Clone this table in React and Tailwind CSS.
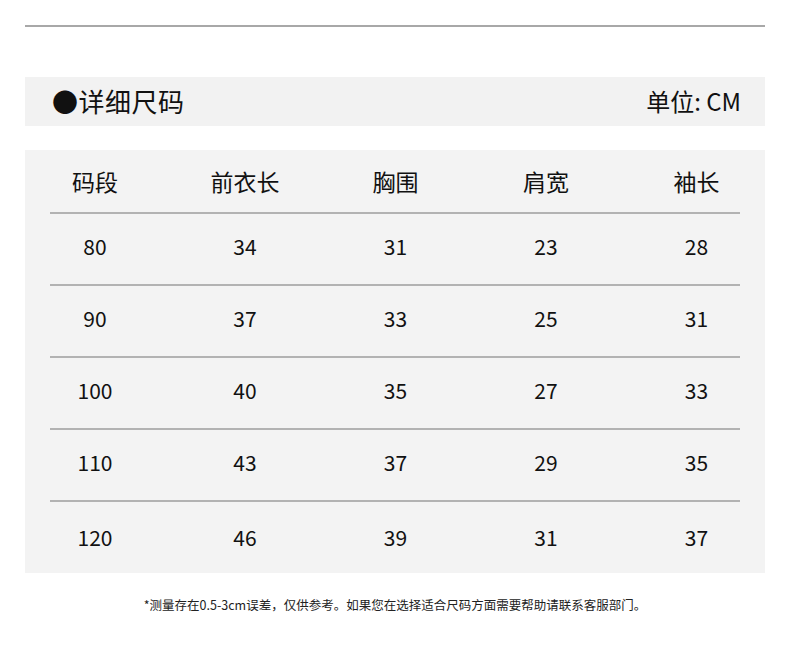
import React from "react";

const headers = ["码段", "前衣长", "胸围", "肩宽", "袖长"];

const rows = [
  ["80", "34", "31", "23", "28"],
  ["90", "37", "33", "25", "31"],
  ["100", "40", "35", "27", "33"],
  ["110", "43", "37", "29", "35"],
  ["120", "46", "39", "31", "37"],
];

const font = { fontFamily: '"Noto Sans CJK SC", "Noto Sans", sans-serif' };

export default function App() {
  return (
    <div className="w-[790px] h-[670px] bg-white text-[#111]" style={font}>
      <div className="pt-[25px] px-[25px]">
        <div className="h-[2px] bg-[#a8a8a8]" />
      </div>

      {/* 标题栏 */}
      <div className="mt-[50px] mx-[25px] h-[49px] bg-[#f2f2f2] flex items-center justify-between pl-[27px] pr-[24px] pb-[2px]">
        <span className="text-[26px] leading-none tracking-[0.5px]">●详细尺码</span>
        <span className="text-[24px] leading-none">单位: CM</span>
      </div>

      {/* 尺码表 */}
      <div className="mt-[24px] mx-[25px] h-[423px] bg-[#f3f3f3]">
        <div className="ml-[-5px] h-[62px] grid grid-cols-[150px_150px_151px_150px_151px] items-center text-center text-[23px]">
          {headers.map((h) => (
            <span key={h}>{h}</span>
          ))}
        </div>
        {rows.map((r, i) => (
          <div key={r[0]}>
            <div className="mx-[25px] h-[2px] bg-[#b2b2b2]" />
            <div
              className={`ml-[-5px] ${
                i === rows.length - 1 ? "h-[71px]" : "h-[70px] pb-[4px]"
              } grid grid-cols-[150px_150px_151px_150px_151px] items-center text-center text-[21px]`}
            >
              {r.map((v, j) => (
                <span key={j}>{v}</span>
              ))}
            </div>
          </div>
        ))}
      </div>

      <p className="mt-[26px] text-center text-[12.5px] text-[#222] leading-none">
        *测量存在0.5-3cm误差，仅供参考。如果您在选择适合尺码方面需要帮助请联系客服部门。
      </p>
    </div>
  );
}
